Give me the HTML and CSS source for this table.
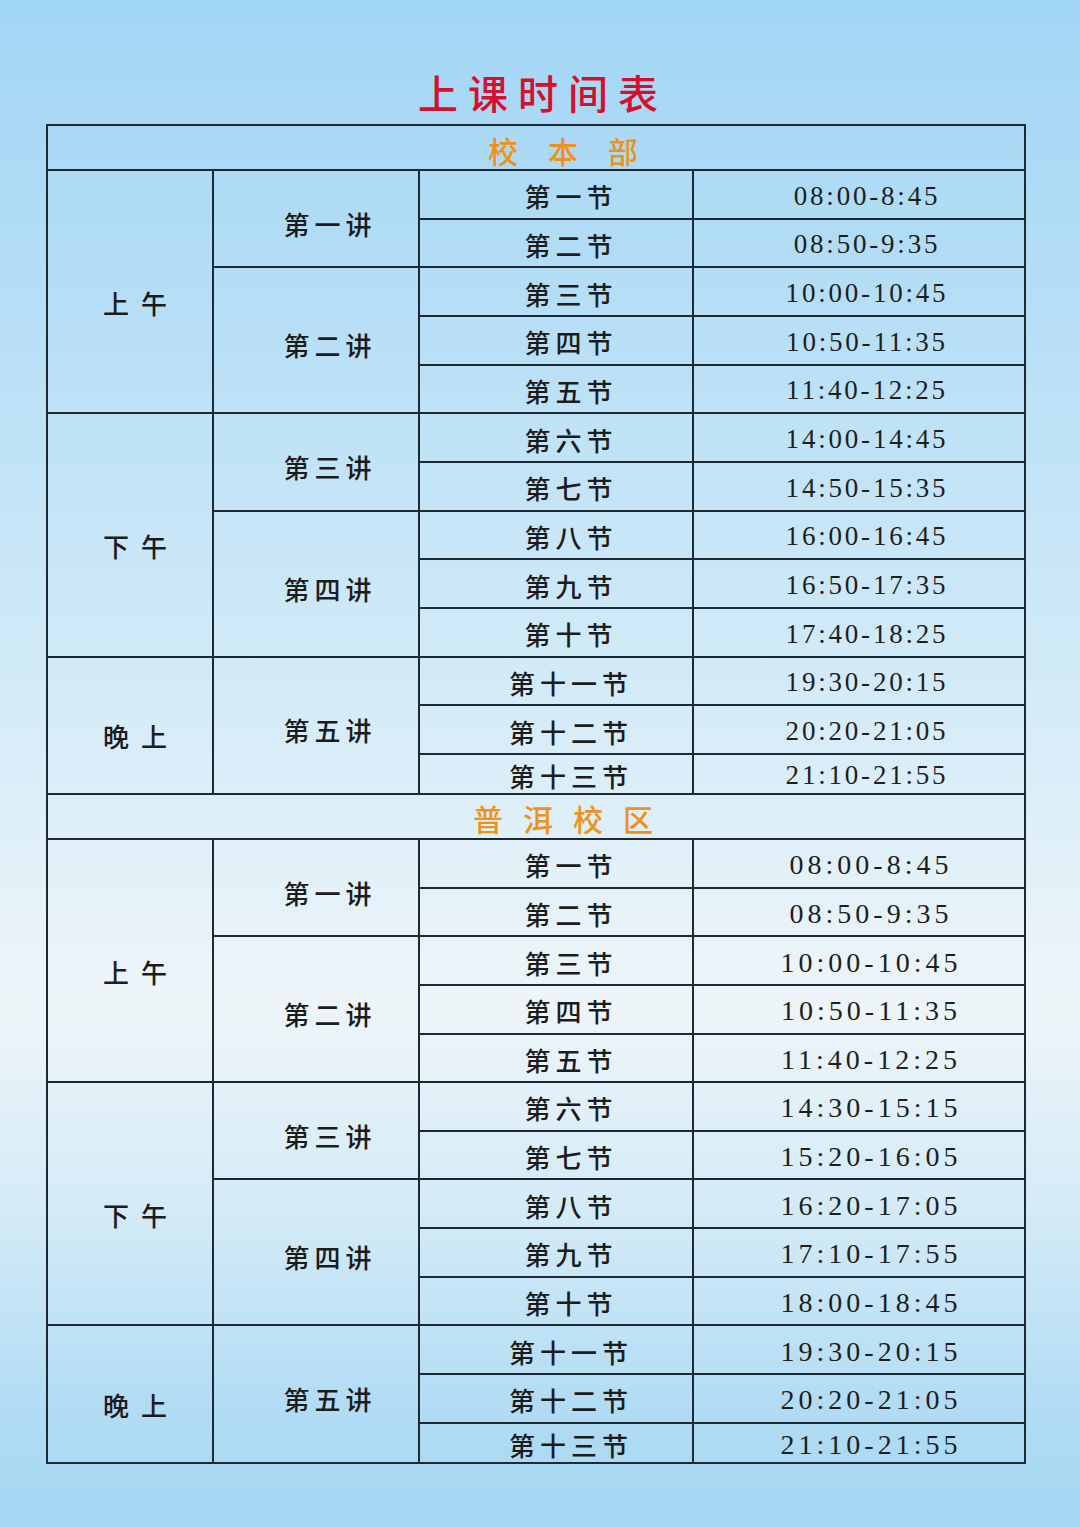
FILE: index.html
```html
<!DOCTYPE html>
<html lang="zh-CN">
<head>
<meta charset="utf-8">
<title>上课时间表</title>
<link rel="stylesheet" href="styles.css">
</head>
<body>
<div class="page">
  <h1 class="title">上课时间表</h1>
  <div class="table">
    <div class="sec-head sec-a">校本部</div>
    <div class="grid g1">
      <div class="c half" style="grid-row: 1 / span 5">上午</div>
      <div class="c lec" style="grid-row: 1 / span 2">第一讲</div>
      <div class="c lec" style="grid-row: 3 / span 3">第二讲</div>
      <div class="c half" style="grid-row: 6 / span 5">下午</div>
      <div class="c lec" style="grid-row: 6 / span 2">第三讲</div>
      <div class="c lec" style="grid-row: 8 / span 3">第四讲</div>
      <div class="c half" style="grid-row: 11 / span 3">晚上</div>
      <div class="c lec" style="grid-row: 11 / span 3">第五讲</div>

      <div class="c per" style="grid-row: 1">第一节</div><div class="c tm" style="grid-row: 1">08:00-8:45</div>
      <div class="c per" style="grid-row: 2">第二节</div><div class="c tm" style="grid-row: 2">08:50-9:35</div>
      <div class="c per" style="grid-row: 3">第三节</div><div class="c tm" style="grid-row: 3">10:00-10:45</div>
      <div class="c per" style="grid-row: 4">第四节</div><div class="c tm" style="grid-row: 4">10:50-11:35</div>
      <div class="c per" style="grid-row: 5">第五节</div><div class="c tm" style="grid-row: 5">11:40-12:25</div>
      <div class="c per" style="grid-row: 6">第六节</div><div class="c tm" style="grid-row: 6">14:00-14:45</div>
      <div class="c per" style="grid-row: 7">第七节</div><div class="c tm" style="grid-row: 7">14:50-15:35</div>
      <div class="c per" style="grid-row: 8">第八节</div><div class="c tm" style="grid-row: 8">16:00-16:45</div>
      <div class="c per" style="grid-row: 9">第九节</div><div class="c tm" style="grid-row: 9">16:50-17:35</div>
      <div class="c per" style="grid-row: 10">第十节</div><div class="c tm" style="grid-row: 10">17:40-18:25</div>
      <div class="c per" style="grid-row: 11">第十一节</div><div class="c tm" style="grid-row: 11">19:30-20:15</div>
      <div class="c per" style="grid-row: 12">第十二节</div><div class="c tm" style="grid-row: 12">20:20-21:05</div>
      <div class="c per" style="grid-row: 13">第十三节</div><div class="c tm" style="grid-row: 13">21:10-21:55</div>
    </div>

    <div class="sec-head sec-b">普洱校区</div>
    <div class="grid g2">
      <div class="c half" style="grid-row: 1 / span 5">上午</div>
      <div class="c lec" style="grid-row: 1 / span 2">第一讲</div>
      <div class="c lec" style="grid-row: 3 / span 3">第二讲</div>
      <div class="c half" style="grid-row: 6 / span 5">下午</div>
      <div class="c lec" style="grid-row: 6 / span 2">第三讲</div>
      <div class="c lec" style="grid-row: 8 / span 3">第四讲</div>
      <div class="c half" style="grid-row: 11 / span 3">晚上</div>
      <div class="c lec" style="grid-row: 11 / span 3">第五讲</div>

      <div class="c per" style="grid-row: 1">第一节</div><div class="c tm" style="grid-row: 1">08:00-8:45</div>
      <div class="c per" style="grid-row: 2">第二节</div><div class="c tm" style="grid-row: 2">08:50-9:35</div>
      <div class="c per" style="grid-row: 3">第三节</div><div class="c tm" style="grid-row: 3">10:00-10:45</div>
      <div class="c per" style="grid-row: 4">第四节</div><div class="c tm" style="grid-row: 4">10:50-11:35</div>
      <div class="c per" style="grid-row: 5">第五节</div><div class="c tm" style="grid-row: 5">11:40-12:25</div>
      <div class="c per" style="grid-row: 6">第六节</div><div class="c tm" style="grid-row: 6">14:30-15:15</div>
      <div class="c per" style="grid-row: 7">第七节</div><div class="c tm" style="grid-row: 7">15:20-16:05</div>
      <div class="c per" style="grid-row: 8">第八节</div><div class="c tm" style="grid-row: 8">16:20-17:05</div>
      <div class="c per" style="grid-row: 9">第九节</div><div class="c tm" style="grid-row: 9">17:10-17:55</div>
      <div class="c per" style="grid-row: 10">第十节</div><div class="c tm" style="grid-row: 10">18:00-18:45</div>
      <div class="c per" style="grid-row: 11">第十一节</div><div class="c tm" style="grid-row: 11">19:30-20:15</div>
      <div class="c per" style="grid-row: 12">第十二节</div><div class="c tm" style="grid-row: 12">20:20-21:05</div>
      <div class="c per" style="grid-row: 13">第十三节</div><div class="c tm" style="grid-row: 13">21:10-21:55</div>
    </div>
  </div>
</div>
</body>
</html>
```

FILE: styles.css
```css
html, body {
  margin: 0;
  padding: 0;
}
body {
  width: 1080px;
  min-height: 1527px;
  background: linear-gradient(to bottom,
    #a2d6f5 0%,
    #b6def6 20%,
    #d3ebf8 45%,
    #eef5f9 66%,
    #d2eaf7 80%,
    #b2dcf4 92%,
    #a4d7f3 100%);
  font-family: "Noto Sans CJK SC", "Noto Sans", sans-serif;
  color: #1c1c1c;
}
.page {
  padding-top: 68px;
}
.title {
  margin: 0 0 8px 0;
  height: 48px;
  line-height: 48px;
  text-align: center;
  font-size: 40px;
  font-weight: 500;
  letter-spacing: 10px;
  padding-left: 6px;
  color: #d6102c;
}
.table {
  margin-left: 46px;
  width: 980px;
  box-sizing: border-box;
  border-top: 2px solid #1e2a33;
  border-left: 2px solid #1e2a33;
}
.sec-head {
  height: 39px;
  border-right: 2px solid #1e2a33;
  border-bottom: 2px solid #1e2a33;
  display: flex;
  align-items: center;
  justify-content: center;
  font-size: 30px;
  font-weight: 500;
  color: #ef921b;
  padding-top: 4px;
  box-sizing: content-box;
}
.sec-a {
  letter-spacing: 30px;
  padding-left: 84px;
}
.sec-b {
  letter-spacing: 20px;
  padding-left: 74px;
}
.grid {
  display: grid;
  grid-template-columns: 166px 206px 274px 332px;
  grid-template-rows: repeat(12, 48.67px) 40px;
}
.c {
  box-sizing: border-box;
  border-right: 2px solid #1e2a33;
  border-bottom: 2px solid #1e2a33;
  display: flex;
  align-items: center;
  justify-content: center;
  font-weight: 500;
  font-size: 26px;
  line-height: 1;
  white-space: nowrap;
}
.half {
  grid-column: 1;
  letter-spacing: 12px;
  padding-left: 22px;
  padding-top: 22px;
}
.lec {
  grid-column: 2;
  letter-spacing: 5px;
  padding-left: 28px;
  padding-top: 10px;
}
.per {
  grid-column: 3;
  letter-spacing: 5px;
  padding-left: 30px;
  padding-top: 4px;
}
.tm {
  grid-column: 4;
  font-family: "Liberation Serif", "Times New Roman", serif;
  font-weight: 400;
  font-size: 27px;
  letter-spacing: 2.8px;
  padding-left: 16px;
  padding-top: 4px;
  color: #1e1e1e;
}
.g2 .tm {
  font-size: 28px;
  letter-spacing: 4px;
  padding-left: 24px;
}
```
